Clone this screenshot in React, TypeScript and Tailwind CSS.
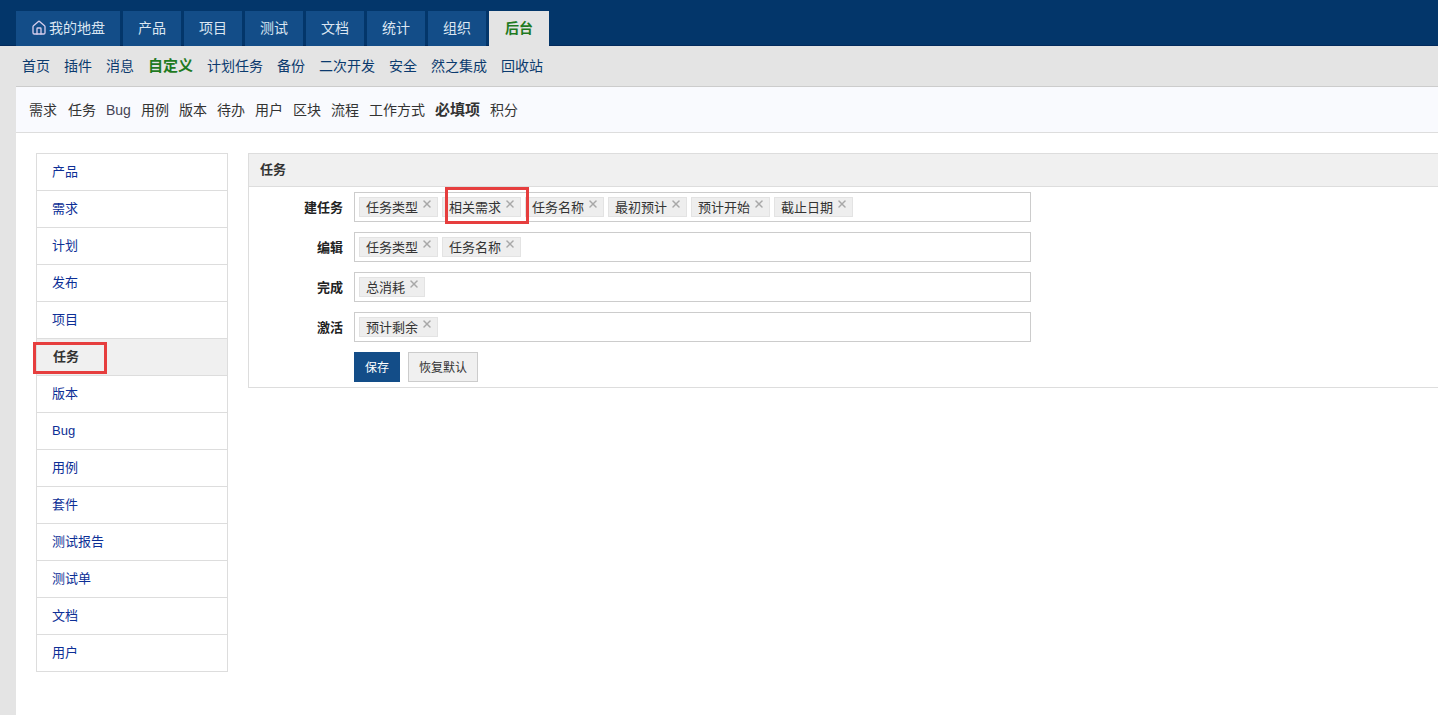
import { Home, X } from 'lucide-react'

const mainNav = ['产品', '项目', '测试', '文档', '统计', '组织']
const subNav = ['首页', '插件', '消息', '自定义', '计划任务', '备份', '二次开发', '安全', '然之集成', '回收站']
const pageNav = ['需求', '任务', 'Bug', '用例', '版本', '待办', '用户', '区块', '流程', '工作方式', '必填项', '积分']
const sideNav = ['产品', '需求', '计划', '发布', '项目', '任务', '版本', 'Bug', '用例', '套件', '测试报告', '测试单', '文档', '用户']

const rows = [
  { label: '建任务', tags: ['任务类型', '相关需求', '任务名称', '最初预计', '预计开始', '截止日期'] },
  { label: '编辑', tags: ['任务类型', '任务名称'] },
  { label: '完成', tags: ['总消耗'] },
  { label: '激活', tags: ['预计剩余'] },
]

function Tag({ text }: { text: string }) {
  return (
    <span className="relative h-[20px] pt-px pl-[6px] pr-[19px] flex items-center bg-[#eeeeee] border border-[#e3e3e3] text-[13px] leading-[18px] text-[#333333] whitespace-nowrap">
      {text}
      <X size={12} strokeWidth={3} className="absolute right-[4px] top-0 text-[#a8a8a8]" />
    </span>
  )
}

export default function App() {
  return (
    <div className="relative h-[715px] overflow-hidden bg-[#e4e4e4] font-['Liberation_Sans','Noto_Sans_CJK_SC',sans-serif]">
      {/* Main nav */}
      <div className="h-[46px] bg-[#03366a] border-b border-[#022a5c] pl-4 pt-[11px] flex gap-[3px]">
        <a className="w-[104px] h-[35px] pb-px bg-[#134d88] text-[#dbe6f2] text-sm flex items-center justify-center gap-[2px]">
          <Home size={16} strokeWidth={2} className="text-[#d5ccec]" />
          我的地盘
        </a>
        {mainNav.map((item) => (
          <a key={item} className="w-[58px] h-[35px] pb-px bg-[#134d88] text-[#dbe6f2] text-sm flex items-center justify-center">
            {item}
          </a>
        ))}
        <a className="w-[60px] h-[35px] pb-px bg-[#e4e4e4] text-[#1f7a1f] text-sm font-bold flex items-center justify-center">
          后台
        </a>
      </div>

      {/* Sub nav */}
      <div className="h-[40px] pl-[22px] flex items-center gap-[14px] text-sm">
        {subNav.map((item) => (
          <a key={item} className={item === '自定义' ? 'text-[15px] font-bold text-[#1f7a1f]' : 'text-[#0b3a6e]'}>
            {item}
          </a>
        ))}
      </div>

      <div className="ml-4 h-[629px] bg-white">
        {/* Page nav */}
        <div className="h-[47px] bg-[#f9fafe] border-t border-t-[#cccccc] border-b border-b-[#dddddd] pl-[13px] flex items-center gap-[10px] text-sm text-[#333333]">
          {pageNav.map((item) => (
            <a
              key={item}
              className={
                item === '必填项'
                  ? 'text-[15px] font-bold'
                  : item === 'Bug'
                    ? 'text-[#444455]'
                    : item === '需求'
                      ? 'w-[29px]'
                      : ''
              }
            >
              {item}
            </a>
          ))}
        </div>

        <div className="pl-5 pt-5 flex gap-5 items-start">
          {/* Side nav */}
          <div className="relative w-[192px] shrink-0 border-t border-l border-r border-[#dddddd]">
            {sideNav.map((item) => (
              <a
                key={item}
                className={
                  item === '任务'
                    ? 'h-[37px] pl-4 flex items-center border-b border-[#dddddd] bg-[#f0f0f0] text-[13px] font-bold text-[#333333]'
                    : 'h-[37px] pl-[15px] flex items-center border-b border-[#dddddd] text-[13px] text-[#0d2f96]'
                }
              >
                {item}
              </a>
            ))}
            <div className="absolute left-[-4px] top-[188px] w-[74px] h-[32px] border-[3px] border-[#e63e3e]" />
          </div>

          {/* Panel */}
          <div className="flex-1 h-[235px] border-t border-b border-l border-[#dddddd]">
            <div className="h-[33px] pl-[11px] flex items-center bg-[#f0f0f0] border-b border-[#dddddd] text-[13px] font-bold text-[#333333]">
              任务
            </div>
            <div className="relative pt-[5px] flex flex-col gap-[10px]">
              {rows.map((row) => (
                <div key={row.label} className="flex items-center">
                  <label className="w-[94px] pt-px text-right text-[13px] font-bold text-[#222222]">{row.label}</label>
                  <div className="ml-[11px] w-[677px] h-[30px] pl-1 pt-[4px] flex items-start gap-1 border border-[#cccccc] bg-white">
                    {row.tags.map((tag) => (
                      <Tag key={tag} text={tag} />
                    ))}
                  </div>
                </div>
              ))}
              <div className="pl-[105px] flex gap-2">
                <button className="w-[46px] h-[30px] pt-px bg-[#134d88] text-white text-xs">保存</button>
                <button className="w-[70px] h-[30px] pt-px bg-[#f0f0f0] border border-[#cccccc] text-[#333333] text-xs">恢复默认</button>
              </div>
              <div className="absolute left-[196px] top-0 w-[84px] h-[37px] border-[3px] border-[#e63e3e]" />
            </div>
          </div>
        </div>
      </div>
    </div>
  )
}
